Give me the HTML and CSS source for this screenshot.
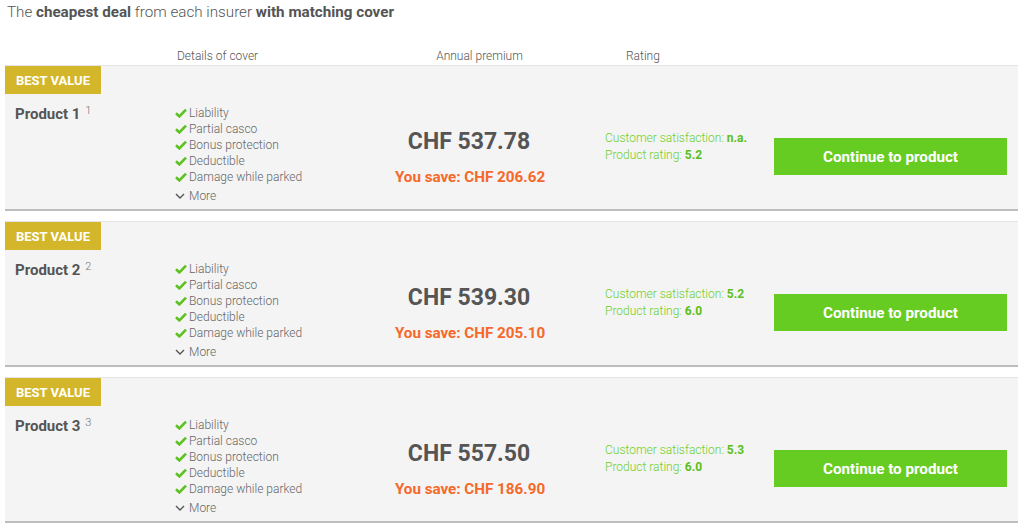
FILE: index.html
```html
<!DOCTYPE html>
<html lang="en">

<head>
    <meta charset="UTF-8">
    <meta name="viewport" content="width=device-width, initial-scale=1.0">
    <title>Cheapest deal per insurer</title>
    <link rel="stylesheet" href="styles.css">
</head>

<body>

    <h1 class="intro">The <b>cheapest deal</b> from each insurer <b>with matching cover</b></h1>

    <div class="head-row">
        <div class="col-left"></div>
        <div class="col-cover">Details of cover</div>
        <div class="col-premium">Annual premium</div>
        <div class="col-rating">Rating</div>
    </div>

    <div class="card">
        <div class="col-left">
            <div class="badge">BEST VALUE</div>
            <h3 class="product">Product 1 <sup>1</sup></h3>
        </div>
        <ul class="col-cover features">
            <li><svg class="tick" viewBox="0 0 12 10"><path d="M1 5.2l3.4 3.2L11 1.6"/></svg>Liability</li>
            <li><svg class="tick" viewBox="0 0 12 10"><path d="M1 5.2l3.4 3.2L11 1.6"/></svg>Partial casco</li>
            <li><svg class="tick" viewBox="0 0 12 10"><path d="M1 5.2l3.4 3.2L11 1.6"/></svg>Bonus protection</li>
            <li><svg class="tick" viewBox="0 0 12 10"><path d="M1 5.2l3.4 3.2L11 1.6"/></svg>Deductible</li>
            <li><svg class="tick" viewBox="0 0 12 10"><path d="M1 5.2l3.4 3.2L11 1.6"/></svg>Damage while parked</li>
            <li class="more"><svg class="chev" viewBox="0 0 10 6"><path d="M1 1l4 4 4-4"/></svg>More</li>
        </ul>
        <div class="col-premium">
            <div class="price">CHF 537.78</div>
            <div class="save">You save: CHF 206.62</div>
        </div>
        <div class="col-rating">
            <p>Customer satisfaction: <b>n.a.</b></p>
            <p>Product rating: <b>5.2</b></p>
        </div>
        <div class="col-action">
            <a class="btn">Continue to product</a>
        </div>
    </div>

    <div class="card">
        <div class="col-left">
            <div class="badge">BEST VALUE</div>
            <h3 class="product">Product 2 <sup>2</sup></h3>
        </div>
        <ul class="col-cover features">
            <li><svg class="tick" viewBox="0 0 12 10"><path d="M1 5.2l3.4 3.2L11 1.6"/></svg>Liability</li>
            <li><svg class="tick" viewBox="0 0 12 10"><path d="M1 5.2l3.4 3.2L11 1.6"/></svg>Partial casco</li>
            <li><svg class="tick" viewBox="0 0 12 10"><path d="M1 5.2l3.4 3.2L11 1.6"/></svg>Bonus protection</li>
            <li><svg class="tick" viewBox="0 0 12 10"><path d="M1 5.2l3.4 3.2L11 1.6"/></svg>Deductible</li>
            <li><svg class="tick" viewBox="0 0 12 10"><path d="M1 5.2l3.4 3.2L11 1.6"/></svg>Damage while parked</li>
            <li class="more"><svg class="chev" viewBox="0 0 10 6"><path d="M1 1l4 4 4-4"/></svg>More</li>
        </ul>
        <div class="col-premium">
            <div class="price">CHF 539.30</div>
            <div class="save">You save: CHF 205.10</div>
        </div>
        <div class="col-rating">
            <p>Customer satisfaction: <b>5.2</b></p>
            <p>Product rating: <b>6.0</b></p>
        </div>
        <div class="col-action">
            <a class="btn">Continue to product</a>
        </div>
    </div>

    <div class="card">
        <div class="col-left">
            <div class="badge">BEST VALUE</div>
            <h3 class="product">Product 3 <sup>3</sup></h3>
        </div>
        <ul class="col-cover features">
            <li><svg class="tick" viewBox="0 0 12 10"><path d="M1 5.2l3.4 3.2L11 1.6"/></svg>Liability</li>
            <li><svg class="tick" viewBox="0 0 12 10"><path d="M1 5.2l3.4 3.2L11 1.6"/></svg>Partial casco</li>
            <li><svg class="tick" viewBox="0 0 12 10"><path d="M1 5.2l3.4 3.2L11 1.6"/></svg>Bonus protection</li>
            <li><svg class="tick" viewBox="0 0 12 10"><path d="M1 5.2l3.4 3.2L11 1.6"/></svg>Deductible</li>
            <li><svg class="tick" viewBox="0 0 12 10"><path d="M1 5.2l3.4 3.2L11 1.6"/></svg>Damage while parked</li>
            <li class="more"><svg class="chev" viewBox="0 0 10 6"><path d="M1 1l4 4 4-4"/></svg>More</li>
        </ul>
        <div class="col-premium">
            <div class="price">CHF 557.50</div>
            <div class="save">You save: CHF 186.90</div>
        </div>
        <div class="col-rating">
            <p>Customer satisfaction: <b>5.3</b></p>
            <p>Product rating: <b>6.0</b></p>
        </div>
        <div class="col-action">
            <a class="btn">Continue to product</a>
        </div>
    </div>

</body>

</html>
```

FILE: styles.css
```css
* {
    margin: 0;
    padding: 0;
    box-sizing: border-box;
}

body {
    background-color: white;
    font-family: Roboto, "Liberation Sans", sans-serif;
    color: #555;
    overflow: hidden;
}

.intro {
    font-size: 15.2px;
    font-weight: 300;
    line-height: 20px;
    padding: 2px 7px 0;
    color: #555;
}

.intro b {
    font-weight: 700;
}

.head-row {
    display: flex;
    margin: 26px 6px 0 5px;
    height: 17px;
    font-size: 12px;
    font-weight: 300;
    line-height: 16px;
    color: #555;
}

.head-row .col-cover {
    padding-left: 7px;
}

.head-row .col-premium {
    text-align: center;
    padding-left: 19px;
}

.head-row .col-rating {
    padding-left: 56px;
}

.col-left {
    width: 165px;
}

.col-cover {
    width: 200px;
}

.col-premium {
    width: 200px;
}

.col-rating {
    width: 195px;
}

.card {
    display: flex;
    background-color: #f4f4f4;
    border-top: 1px solid #e4e4e4;
    border-bottom: 2px solid #bdbdbd;
    margin: 0 6px 10px 5px;
    height: 146px;
}

.badge {
    display: inline-block;
    width: 96px;
    height: 28px;
    line-height: 29px;
    text-align: center;
    background-color: #d4b62a;
    color: white;
    font-size: 13px;
    font-weight: 700;
}

.product {
    font-size: 15px;
    font-weight: 700;
    line-height: 18px;
    padding: 8px 0 0 10px;
    color: #555;
}

.product sup {
    font-size: 11px;
    font-weight: 300;
    color: #777;
    vertical-align: 5px;
    margin-left: 1px;
}

.features {
    list-style: none;
    padding: 39px 0 0 5px;
    font-size: 12px;
    font-weight: 300;
    line-height: 16px;
    color: #666;
}

.features li {
    display: flex;
    align-items: center;
}

.tick {
    width: 12px;
    height: 10px;
    margin-right: 2px;
    fill: none;
    stroke: #5cc21f;
    stroke-width: 2.6;
}

.features .more {
    margin-top: 3px;
}

.chev {
    width: 10px;
    height: 6px;
    margin: 0 4px 0 0;
    fill: none;
    stroke: #555;
    stroke-width: 1.4;
}

.col-premium .price {
    padding-top: 63px;
    padding-right: 2px;
    text-align: center;
    font-size: 23px;
    font-weight: 700;
    line-height: 26px;
    color: #555;
}

.save {
    margin-top: 13px;
    text-align: center;
    font-size: 15.2px;
    font-weight: 700;
    line-height: 19px;
    color: #f5692a;
}

.card .col-rating {
    padding: 64px 0 0 35px;
    font-size: 12px;
    font-weight: 300;
    line-height: 17px;
    color: #6fcf2c;
}

.col-rating b {
    font-weight: 700;
    color: #5bbf1c;
}

.col-action {
    flex: 1;
    padding: 72px 11px 0 9px;
}

.btn {
    display: block;
    height: 37px;
    line-height: 39px;
    text-align: center;
    background-color: #66cc22;
    color: white;
    font-size: 15.2px;
    font-weight: 700;
}
```
